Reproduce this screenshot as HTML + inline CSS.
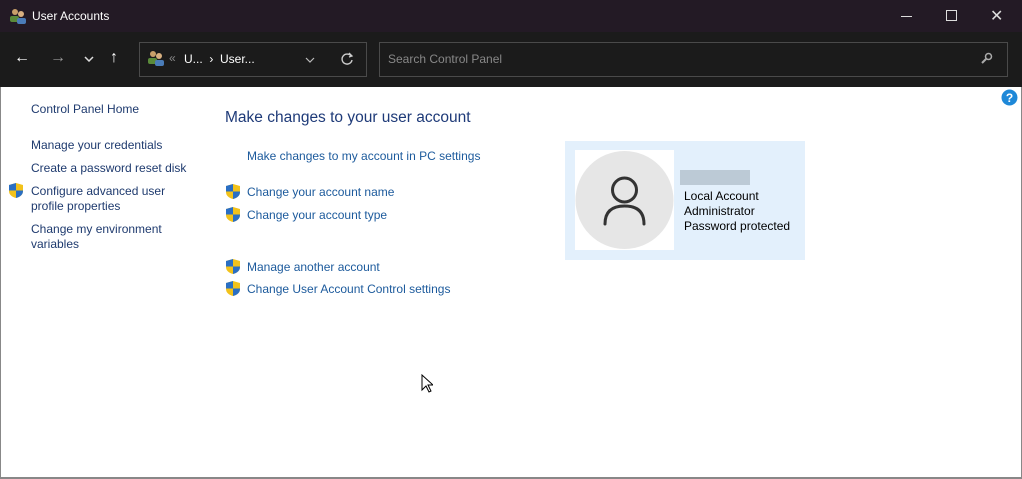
<!DOCTYPE html>
<html><head><style>
body{margin:0;width:1022px;height:479px;overflow:hidden;background:#fff;font-family:"Liberation Sans",sans-serif;position:relative}
.title{position:absolute;left:0;top:0;width:1022px;height:32px;background:#231a25;color:#fff;font-size:12px}
.tb{position:absolute;left:0;top:32px;width:1022px;height:55px;background:#1b1b1b}
.c{position:absolute;white-space:nowrap;font-size:12px}
.l{color:#1e3a6e}
.b{color:#1c5a9c}
svg{position:absolute}
</style></head><body>
<div class="title">
<svg style="left:9px;top:8px" width="18" height="16"><circle cx="6" cy="4" r="3" fill="#c9a06a"/><rect x="1" y="8" width="9" height="6" rx="2" fill="#5a8a3a"/><circle cx="12" cy="6" r="3" fill="#d8b080"/><rect x="8" y="10" width="9" height="6" rx="2" fill="#4a7cb8"/></svg>
<div class="c" style="left:32px;top:9px;color:#fff">User Accounts</div>
<div style="position:absolute;left:901px;top:16px;width:11px;height:1px;background:#ddd"></div>
<div style="position:absolute;left:946px;top:10px;width:9px;height:9px;border:1px solid #ddd"></div>
<div class="c" style="left:990px;top:6px;color:#ddd;font-size:16px">✕</div>
</div>
<div class="tb">
<div class="c" style="left:14px;top:17px;color:#fff;font-size:16px;font-weight:bold">←</div>
<div class="c" style="left:50px;top:17px;color:#999;font-size:16px;font-weight:bold">→</div>
<svg style="left:84px;top:24px" width="10" height="6"><path d="M1 1L5 5L9 1" stroke="#ddd" stroke-width="1.5" fill="none"/></svg>
<div class="c" style="left:110px;top:17px;color:#fff;font-size:16px;font-weight:bold">↑</div>
<div style="position:absolute;left:139px;top:10px;width:226px;height:33px;border:1px solid #4a4a4a"></div>
<svg style="left:147px;top:18px" width="18" height="16"><circle cx="6" cy="4" r="3" fill="#c9a06a"/><rect x="1" y="8" width="9" height="6" rx="2" fill="#5a8a3a"/><circle cx="12" cy="6" r="3" fill="#d8b080"/><rect x="8" y="10" width="9" height="6" rx="2" fill="#4a7cb8"/></svg>
<div class="c" style="left:169px;top:19px;color:#888">«</div>
<div class="c" style="left:184px;top:20px;color:#fff">U...&nbsp;&nbsp;›&nbsp;&nbsp;User...</div>
<svg style="left:305px;top:25px" width="10" height="6"><path d="M1 1L5 5L9 1" stroke="#bbb" stroke-width="1.2" fill="none"/></svg>
<svg style="left:340px;top:20px" width="14" height="14"><path d="M11 4A5 5 0 1 0 12 8" stroke="#ccc" stroke-width="1.4" fill="none"/><path d="M9 1L12 4L9 5" stroke="#ccc" stroke-width="1.3" fill="none"/></svg>
<div style="position:absolute;left:379px;top:10px;width:627px;height:33px;border:1px solid #4a4a4a"></div>
<div class="c" style="left:388px;top:20px;color:#888">Search Control Panel</div>
<svg style="left:981px;top:20px" width="12" height="12"><circle cx="7.5" cy="4.5" r="3" stroke="#aaa" stroke-width="1.5" fill="none"/><path d="M5 7L1 11" stroke="#aaa" stroke-width="2"/></svg>
</div>
<div style="position:absolute;left:0;top:87px;width:1px;height:392px;background:#888"></div>
<div style="position:absolute;left:1021px;top:87px;width:1px;height:392px;background:#888"></div>
<div style="position:absolute;left:0;top:477px;width:1022px;height:2px;background:#888"></div>
<svg style="left:1001px;top:89px" width="17" height="17"><circle cx="8.5" cy="8.5" r="8" fill="#1e88d8"/><text x="8.5" y="13" font-size="12" font-weight="bold" fill="#fff" text-anchor="middle" font-family="Liberation Sans">?</text></svg>
<div class="c l" style="left:31px;top:102px">Control Panel Home</div>
<div class="c l" style="left:31px;top:138px">Manage your credentials</div>
<div class="c l" style="left:31px;top:161px">Create a password reset disk</div>
<div class="c l" style="left:31px;top:184px;line-height:15px">Configure advanced user<br>profile properties</div>
<div class="c l" style="left:31px;top:222px;line-height:15px">Change my environment<br>variables</div>
<div class="c" style="left:225px;top:109px;font-size:15.5px;color:#1e3a78">Make changes to your user account</div>
<div class="c b" style="left:247px;top:149px">Make changes to my account in PC settings</div>
<div class="c b" style="left:247px;top:185px">Change your account name</div>
<div class="c b" style="left:247px;top:208px">Change your account type</div>
<div class="c b" style="left:247px;top:260px">Manage another account</div>
<div class="c b" style="left:247px;top:282px">Change User Account Control settings</div>
<svg width="0" height="0"><defs><g id="sh"><path d="M7 0L14 2V8Q14 13 7 15Q0 13 0 8V2Z" fill="#f2c21b"/><path d="M7 0V7.5H0V2Z" fill="#2a6fc4"/><path d="M7 7.5H14V8Q14 13 7 15Z" fill="#2a6fc4"/></g></defs></svg>
<svg style="left:9px;top:183px" width="14" height="15"><use href="#sh"/></svg>
<svg style="left:226px;top:184px" width="14" height="15"><use href="#sh"/></svg>
<svg style="left:226px;top:207px" width="14" height="15"><use href="#sh"/></svg>
<svg style="left:226px;top:259px" width="14" height="15"><use href="#sh"/></svg>
<svg style="left:226px;top:281px" width="14" height="15"><use href="#sh"/></svg>
<div style="position:absolute;left:565px;top:141px;width:240px;height:119px;background:#e3f0fc"></div>
<div style="position:absolute;left:575px;top:150px;width:99px;height:100px;background:#fff"></div>
<svg style="left:575px;top:150px" width="99" height="100"><circle cx="49.5" cy="50" r="49" fill="#e6e6e6"/><circle cx="49.5" cy="40" r="12" stroke="#333" stroke-width="3" fill="none"/><path d="M30 74Q30 56 49.5 56Q69 56 69 74" stroke="#333" stroke-width="3" fill="none" stroke-linecap="round"/></svg>
<div style="position:absolute;left:680px;top:170px;width:70px;height:15px;background:#bccad6"></div>
<div class="c" style="left:684px;top:189px;color:#000;line-height:15px">Local Account<br>Administrator<br>Password protected</div>
<svg style="left:421px;top:374px" width="12" height="19"><path d="M1 1V16L5 12L8 18L10 17L7 11H12Z" fill="#fff" stroke="#000"/></svg>
</body></html>
